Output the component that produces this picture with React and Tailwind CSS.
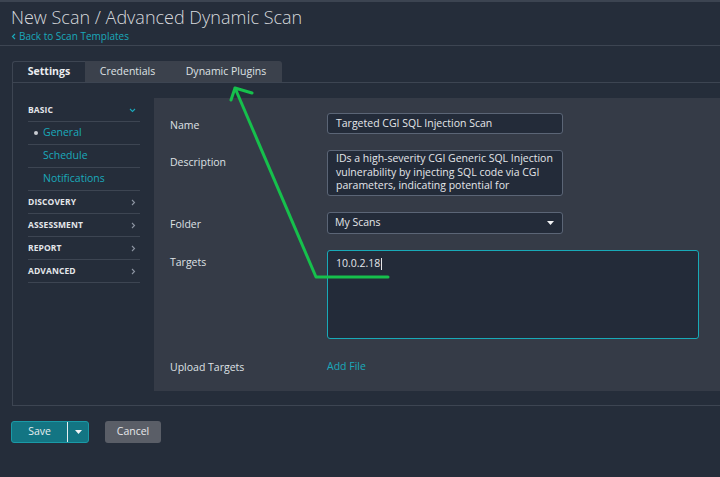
import React from "react";

const SideItem = ({ label, open }) => (
  <div className="flex items-center justify-between h-[23px] border-b border-[#3d4552] text-[8.5px] font-bold text-[#e4e6ea] tracking-[0.1px]">
    <span>{label}</span>
    <span className="text-[#8d95a2] text-[10px] font-normal pr-1">
      {open ? (
        <svg width="7" height="5" viewBox="0 0 7 5">
          <path d="M1 1l2.5 2.5L6 1" stroke="#1aa9bb" fill="none" strokeWidth="1.1" />
        </svg>
      ) : (
        <svg width="5" height="7" viewBox="0 0 5 7">
          <path d="M1 1l2.5 2.5L1 6" stroke="#8d95a2" fill="none" strokeWidth="1.1" />
        </svg>
      )}
    </span>
  </div>
);

const SubItem = ({ label, active }) => (
  <div className="flex items-center h-[23px] border-b border-[#3d4552] text-[10.5px] text-[#1aa9bb]">
    <span className="w-[15px] flex justify-center">
      {active && <span className="w-[4px] h-[4px] rounded-full bg-[#c9ccd2]" />}
    </span>
    <span>{label}</span>
  </div>
);

const Field = ({ label, children, mt }) => (
  <div className={`flex ${mt}`}>
    <div className="w-[157px] text-[10.5px] text-[#dfe1e5] pt-[5px]">{label}</div>
    <div className="flex-1">{children}</div>
  </div>
);

export default function App() {
  return (
    <div
      className="relative w-[720px] h-[477px] bg-[#252d3a] overflow-hidden"
      style={{ fontFamily: '"Open Sans", "Liberation Sans", sans-serif' }}
    >
      <div className="h-[2px] bg-[#3c4451]" />
      <div className="px-[11px] pt-[3px] h-[43px]">
        <div className="text-[18px] leading-[24px] text-[#d7d9dd] font-light">
          New Scan / Advanced Dynamic Scan
        </div>
        <div className="flex items-center gap-[3px] text-[10px] text-[#1aa9bb]">
          <svg width="5" height="7" viewBox="0 0 5 7">
            <path d="M4 1L1.5 3.5 4 6" stroke="#1aa9bb" fill="none" strokeWidth="1.2" />
          </svg>
          <span>Back to Scan Templates</span>
        </div>
      </div>
      <div className="h-[1px] bg-[#3d4552]" />

      <div className="ml-[12px] mt-[15px]">
        <div className="flex h-[22px] border-b border-[#3d4552]">
          <div className="w-[73px] flex items-center justify-center text-[10.5px] font-bold text-[#eceef1] border-t border-l border-[#3d4552] rounded-tl-[3px]">
            Settings
          </div>
          <div className="w-[85px] flex items-center justify-center text-[10.5px] text-[#dfe1e5] bg-[#3b414c]">
            Credentials
          </div>
          <div className="w-[112px] flex items-center justify-center text-[10.5px] text-[#dfe1e5] bg-[#3b414c] rounded-tr-[3px]">
            Dynamic Plugins
          </div>
        </div>

        <div className="flex border-l border-b border-[#3d4552] pt-[15px] pb-[14px]">
          <div className="w-[141px] pl-[15px] pr-[14px] pt-[1px]">
            <SideItem label="BASIC" open />
            <SubItem label="General" active />
            <SubItem label="Schedule" />
            <SubItem label="Notifications" />
            <SideItem label="DISCOVERY" />
            <SideItem label="ASSESSMENT" />
            <SideItem label="REPORT" />
            <SideItem label="ADVANCED" />
          </div>

          <div className="flex-1 h-[293px] bg-[#353b47] pl-[16px] pt-[15px]">
            <Field label="Name" mt="">
              <div className="w-[236px] h-[21px] rounded-[3px] border border-[#5b6576] bg-[#232b39] px-[8px] text-[10.5px] leading-[19px] text-[#e4e6ea]">
                Targeted CGI SQL Injection Scan
              </div>
            </Field>
            <Field label="Description" mt="mt-[16px]">
              <div className="w-[236px] h-[46px] rounded-[3px] border border-[#5b6576] bg-[#232b39] px-[8px] pt-[1px] text-[10.5px] leading-[13.5px] text-[#e4e6ea] overflow-hidden">
                IDs a high-severity CGI Generic SQL Injection vulnerability by injecting SQL code via CGI parameters, indicating potential for
              </div>
            </Field>
            <Field label="Folder" mt="mt-[16px]">
              <div className="w-[236px] h-[22px] rounded-[3px] border border-[#5b6576] bg-[#232b39] pl-[7px] pr-[8px] flex items-center justify-between text-[10.5px] text-[#e4e6ea]">
                <span>My Scans</span>
                <svg width="7" height="4" viewBox="0 0 7 4">
                  <path d="M0 0h7L3.5 4z" fill="#f2f3f5" />
                </svg>
              </div>
            </Field>
            <Field label="Targets" mt="mt-[16px]">
              <div className="w-[372px] h-[89px] rounded-[3px] border border-[#18aab8] bg-[#232b39] px-[8px] pt-[5px] text-[10.5px] text-[#e4e6ea]">
                <span>10.0.2.18</span>
                <span className="inline-block w-[1px] h-[12px] bg-[#e4e6ea] align-middle ml-[1px]" />
              </div>
            </Field>
            <Field label="Upload Targets" mt="mt-[16px]">
              <div className="text-[10.5px] text-[#1aa9bb] pt-[4px]">Add File</div>
            </Field>
          </div>
        </div>
      </div>

      <div className="flex items-center ml-[11px] mt-[15px] gap-[16px]">
        <div className="flex h-[22px] rounded-[3px] border border-[#1a9aa7] bg-[#137583] overflow-hidden">
          <div className="w-[56px] flex items-center justify-center text-[10.5px] text-[#e6eef0] border-r border-[#e6eef0]">
            Save
          </div>
          <div className="w-[20px] flex items-center justify-center">
            <svg width="7" height="4" viewBox="0 0 7 4">
              <path d="M0 0h7L3.5 4z" fill="#f2f3f5" />
            </svg>
          </div>
        </div>
        <div className="w-[56px] h-[22px] rounded-[3px] bg-[#5a5e67] flex items-center justify-center text-[10.5px] text-[#e6e7ea]">
          Cancel
        </div>
      </div>

      <svg className="absolute left-0 top-0 pointer-events-none" width="720" height="477">
        <path
          d="M388 277 L316 277 L235 88 M231 100 L235 88 L252 93"
          stroke="#16c04c"
          strokeWidth="3"
          fill="none"
          strokeLinecap="round"
          strokeLinejoin="round"
        />
      </svg>
    </div>
  );
}
